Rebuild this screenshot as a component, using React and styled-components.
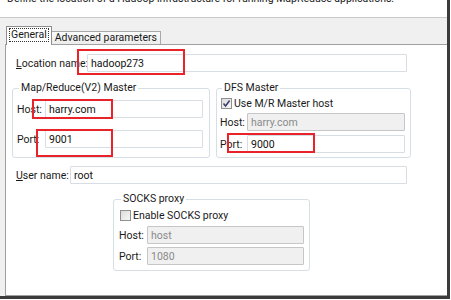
import React from 'react';
import styled, { createGlobalStyle } from 'styled-components';

const GlobalStyle = createGlobalStyle`
  html, body {
    margin: 0;
    padding: 0;
    background: #ffffff;
  }
  body {
    font-family: Roboto, "Liberation Sans", sans-serif;
    font-size: 10.5px;
    color: #1a1a1a;
  }
`;

const Frame = styled.div`
  position: relative;
  width: 447px;
  height: 296px;
  border-right: 3px solid #3b3b3b;
  border-bottom: 3px solid #3b3b3b;
  background: #f0f0f0;
  overflow: hidden;
  display: flex;
  flex-direction: column;
`;

const Header = styled.div`
  height: 17px;
  background: #ffffff;
  border-bottom: 1px solid #c9c9c9;
  overflow: hidden;
`;

const Desc = styled.p`
  margin: -8px 0 0 7px;
  line-height: 14px;
  white-space: nowrap;
`;

const Body = styled.div`
  flex: 1;
  display: flex;
  flex-direction: column;
  padding-left: 5px;
`;

const TabRow = styled.div`
  height: 26px;
  display: flex;
  align-items: flex-end;
  padding-left: 1px;
`;

const Tab = styled.div`
  box-sizing: border-box;
  height: ${p => (p.$active ? '19px' : '13px')};
  margin-bottom: ${p => (p.$active ? '-1px' : '0')};
  padding: ${p => (p.$active ? '2px 3px 0' : '0 3px')};
  background: ${p => (p.$active ? '#ffffff' : 'linear-gradient(#fbfbfb, #ececec)')};
  border: 1px solid ${p => (p.$active ? '#8e8e8e' : '#a9a9a9')};
  border-bottom: none;
  border-left: ${p => (p.$active ? '1px solid #8e8e8e' : 'none')};
  position: relative;
  z-index: 1;
  line-height: 12px;
  white-space: nowrap;
`;

const TabText = styled.span`
  display: inline-block;
  outline: ${p => (p.$focus ? '1px dotted #333' : 'none')};
  padding: 0 ${p => (p.$focus ? '1px' : '0')};
`;

const Panel = styled.div`
  flex: 1;
  background: #ffffff;
  border: 1px solid #a0a0a0;
  border-right: none;
  padding: 9px 0 0 6px;
  display: flex;
  flex-direction: column;
`;

const Row = styled.div`
  display: flex;
  align-items: center;
  padding-left: ${p => p.$indent || 0}px;
  margin-top: ${p => p.$top || 0}px;
`;

const Label = styled.span`
  width: ${p => p.$w}px;
  flex: none;
  white-space: nowrap;
`;

const Input = styled.input`
  box-sizing: border-box;
  width: ${p => p.$w}px;
  height: 18px;
  margin: 0;
  padding: 0 3px;
  border: 1px solid ${p => (p.disabled ? '#c6c6c6' : '#d8dde3')};
  border-radius: 1px;
  background: ${p => (p.disabled ? '#f0f0f0' : '#ffffff')};
  color: ${p => (p.disabled ? '#8a8a8a' : '#111')};
  font: inherit;
  outline: none;
`;

const Groups = styled.div`
  display: flex;
  gap: 6px;
  margin-top: 9px;
`;

const Group = styled.fieldset`
  box-sizing: border-box;
  width: ${p => p.$w}px;
  margin: ${p => p.$margin || '0'};
  padding: ${p => p.$pad};
  border: 1px solid #d5dfe5;
  border-radius: 3px;
  display: flex;
  flex-direction: column;
  gap: ${p => p.$gap}px;
`;

const Legend = styled.legend`
  padding: 0 2px;
  margin-left: 2px;
  line-height: 14px;
`;

const CheckRow = styled.label`
  display: flex;
  align-items: center;
  height: 13px;
  gap: 2px;
  padding-left: 1px;
`;

const Box = styled.span`
  box-sizing: border-box;
  width: 11px;
  height: 11px;
  border: 1px solid #8f8f8f;
  background: linear-gradient(135deg, #dcdcdc, #f7f7f7);
  display: flex;
  align-items: center;
  justify-content: center;
`;

const Mark = styled.div`
  position: absolute;
  left: ${p => p.$x}px;
  top: ${p => p.$y}px;
  width: ${p => p.$w}px;
  height: ${p => p.$h}px;
  box-sizing: border-box;
  border: 2px solid #e8232a;
  z-index: 5;
`;

const Check = ({ checked, children }) => (
  <CheckRow>
    <Box>
      {checked && (
        <svg width="9" height="9" viewBox="0 0 9 9">
          <path d="M1.5 4.5 L3.6 7 L7.6 1.5" fill="none" stroke="#3a3a6a" strokeWidth="1.5" />
        </svg>
      )}
    </Box>
    {children}
  </CheckRow>
);

const marks = [
  { x: 77, y: 49, w: 108, h: 26 },
  { x: 32, y: 99, w: 81, h: 20 },
  { x: 36, y: 129, w: 77, h: 28 },
  { x: 227, y: 133, w: 88, h: 20 },
];

export default function App() {
  return (
    <>
      <GlobalStyle />
      <Frame>
        <Header>
          <Desc>Define the location of a Hadoop infrastructure for running MapReduce applications.</Desc>
        </Header>
        <Body>
          <TabRow>
            <Tab $active>
              <TabText $focus>General</TabText>
            </Tab>
            <Tab>
              <TabText>Advanced parameters</TabText>
            </Tab>
          </TabRow>
          <Panel>
            <Row $indent={4}>
              <Label $w={71}><u>L</u>ocation name:</Label>
              <Input $w={320} value="hadoop273" readOnly />
            </Row>

            <Groups>
              <Group $w={198} $pad="5px 5px 9px 4px" $gap={12}>
                <Legend>Map/Reduce(V2) Master</Legend>
                <Row>
                  <Label $w={28}>Host:</Label>
                  <Input $w={158} value="harry.com" readOnly />
                </Row>
                <Row>
                  <Label $w={28}>Port:</Label>
                  <Input $w={158} value="9001" readOnly />
                </Row>
              </Group>
              <Group $w={195} $pad="2px 5px 4px 3px" $gap={3}>
                <Legend>DFS Master</Legend>
                <Check checked>Use M/R Master host</Check>
                <Row>
                  <Label $w={27}>Host:</Label>
                  <Input $w={158} value="harry.com" disabled readOnly />
                </Row>
                <Row style={{ marginTop: 1 }}>
                  <Label $w={27}>Port:</Label>
                  <Input $w={158} value="9000" readOnly />
                </Row>
              </Group>
            </Groups>

            <Row $indent={4} $top={8}>
              <Label $w={54}><u>U</u>ser name:</Label>
              <Input $w={337} value="root" readOnly />
            </Row>

            <Group $w={197} $margin="8px 0 0 101px" $pad="3px 5px 5px 5px" $gap={4}>
              <Legend>SOCKS proxy</Legend>
              <Check>Enable SOCKS proxy</Check>
              <Row>
                <Label $w={28}>Host:</Label>
                <Input $w={157} value="host" disabled readOnly />
              </Row>
              <Row style={{ marginTop: -1 }}>
                <Label $w={28}>Port:</Label>
                <Input $w={157} value="1080" disabled readOnly />
              </Row>
            </Group>
          </Panel>
        </Body>
        {marks.map((m, i) => (
          <Mark key={i} $x={m.x} $y={m.y} $w={m.w} $h={m.h} />
        ))}
      </Frame>
    </>
  );
}
